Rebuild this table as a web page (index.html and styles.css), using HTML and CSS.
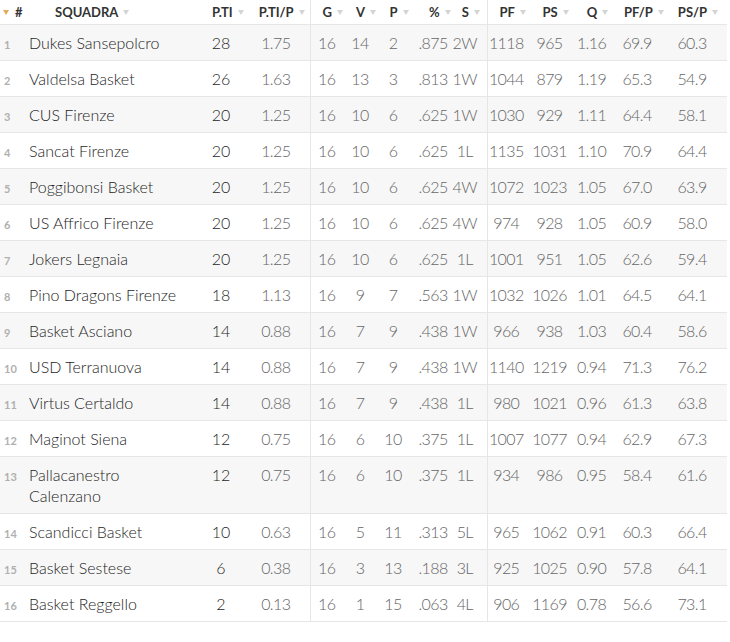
FILE: index.html
```html
<!DOCTYPE html>
<html lang="it">
<head>
<meta charset="utf-8">
<title>Classifica</title>
<link rel="stylesheet" href="styles.css">
</head>
<body>
<table class="standings">
  <colgroup>
    <col class="c-rank"><col class="c-team"><col class="c-pti"><col class="c-ptip"><col class="c-g"><col class="c-v"><col class="c-p"><col class="c-pct"><col class="c-s"><col class="c-pf"><col class="c-ps"><col class="c-q"><col class="c-pfp"><col class="c-psp">
  </colgroup>
  <thead>
    <tr>
      <th class="rank"><span class="arrow active"></span><span class="hash">#</span></th>
      <th class="team">SQUADRA<span class="arrow"></span></th>
      <th class="num">P.TI<span class="arrow"></span></th>
      <th class="num">P.TI/P<span class="arrow"></span></th>
      <th class="num sep">G<span class="arrow"></span></th>
      <th class="num">V<span class="arrow"></span></th>
      <th class="num">P<span class="arrow"></span></th>
      <th class="num pct">%<span class="arrow"></span></th>
      <th class="num s">S<span class="arrow"></span></th>
      <th class="num sep pf">PF<span class="arrow"></span></th>
      <th class="num">PS<span class="arrow"></span></th>
      <th class="num">Q<span class="arrow"></span></th>
      <th class="num">PF/P<span class="arrow"></span></th>
      <th class="num psp">PS/P<span class="arrow"></span></th>
    </tr>
  </thead>
  <tbody>
    <tr><td class="rank">1</td><td class="team">Dukes Sansepolcro</td><td class="pts">28</td><td class="num">1.75</td><td class="num sep">16</td><td class="num">14</td><td class="num">2</td><td class="num pct">.875</td><td class="num s">2W</td><td class="num sep pf">1118</td><td class="num">965</td><td class="num">1.16</td><td class="num">69.9</td><td class="num psp">60.3</td></tr>
    <tr><td class="rank">2</td><td class="team">Valdelsa Basket</td><td class="pts">26</td><td class="num">1.63</td><td class="num sep">16</td><td class="num">13</td><td class="num">3</td><td class="num pct">.813</td><td class="num s">1W</td><td class="num sep pf">1044</td><td class="num">879</td><td class="num">1.19</td><td class="num">65.3</td><td class="num psp">54.9</td></tr>
    <tr><td class="rank">3</td><td class="team">CUS Firenze</td><td class="pts">20</td><td class="num">1.25</td><td class="num sep">16</td><td class="num">10</td><td class="num">6</td><td class="num pct">.625</td><td class="num s">1W</td><td class="num sep pf">1030</td><td class="num">929</td><td class="num">1.11</td><td class="num">64.4</td><td class="num psp">58.1</td></tr>
    <tr><td class="rank">4</td><td class="team">Sancat Firenze</td><td class="pts">20</td><td class="num">1.25</td><td class="num sep">16</td><td class="num">10</td><td class="num">6</td><td class="num pct">.625</td><td class="num s">1L</td><td class="num sep pf">1135</td><td class="num">1031</td><td class="num">1.10</td><td class="num">70.9</td><td class="num psp">64.4</td></tr>
    <tr><td class="rank">5</td><td class="team">Poggibonsi Basket</td><td class="pts">20</td><td class="num">1.25</td><td class="num sep">16</td><td class="num">10</td><td class="num">6</td><td class="num pct">.625</td><td class="num s">4W</td><td class="num sep pf">1072</td><td class="num">1023</td><td class="num">1.05</td><td class="num">67.0</td><td class="num psp">63.9</td></tr>
    <tr><td class="rank">6</td><td class="team">US Affrico Firenze</td><td class="pts">20</td><td class="num">1.25</td><td class="num sep">16</td><td class="num">10</td><td class="num">6</td><td class="num pct">.625</td><td class="num s">4W</td><td class="num sep pf">974</td><td class="num">928</td><td class="num">1.05</td><td class="num">60.9</td><td class="num psp">58.0</td></tr>
    <tr><td class="rank">7</td><td class="team">Jokers Legnaia</td><td class="pts">20</td><td class="num">1.25</td><td class="num sep">16</td><td class="num">10</td><td class="num">6</td><td class="num pct">.625</td><td class="num s">1L</td><td class="num sep pf">1001</td><td class="num">951</td><td class="num">1.05</td><td class="num">62.6</td><td class="num psp">59.4</td></tr>
    <tr><td class="rank">8</td><td class="team">Pino Dragons Firenze</td><td class="pts">18</td><td class="num">1.13</td><td class="num sep">16</td><td class="num">9</td><td class="num">7</td><td class="num pct">.563</td><td class="num s">1W</td><td class="num sep pf">1032</td><td class="num">1026</td><td class="num">1.01</td><td class="num">64.5</td><td class="num psp">64.1</td></tr>
    <tr><td class="rank">9</td><td class="team">Basket Asciano</td><td class="pts">14</td><td class="num">0.88</td><td class="num sep">16</td><td class="num">7</td><td class="num">9</td><td class="num pct">.438</td><td class="num s">1W</td><td class="num sep pf">966</td><td class="num">938</td><td class="num">1.03</td><td class="num">60.4</td><td class="num psp">58.6</td></tr>
    <tr><td class="rank">10</td><td class="team">USD Terranuova</td><td class="pts">14</td><td class="num">0.88</td><td class="num sep">16</td><td class="num">7</td><td class="num">9</td><td class="num pct">.438</td><td class="num s">1W</td><td class="num sep pf">1140</td><td class="num">1219</td><td class="num">0.94</td><td class="num">71.3</td><td class="num psp">76.2</td></tr>
    <tr><td class="rank">11</td><td class="team">Virtus Certaldo</td><td class="pts">14</td><td class="num">0.88</td><td class="num sep">16</td><td class="num">7</td><td class="num">9</td><td class="num pct">.438</td><td class="num s">1L</td><td class="num sep pf">980</td><td class="num">1021</td><td class="num">0.96</td><td class="num">61.3</td><td class="num psp">63.8</td></tr>
    <tr><td class="rank">12</td><td class="team">Maginot Siena</td><td class="pts">12</td><td class="num">0.75</td><td class="num sep">16</td><td class="num">6</td><td class="num">10</td><td class="num pct">.375</td><td class="num s">1L</td><td class="num sep pf">1007</td><td class="num">1077</td><td class="num">0.94</td><td class="num">62.9</td><td class="num psp">67.3</td></tr>
    <tr><td class="rank">13</td><td class="team">Pallacanestro Calenzano</td><td class="pts">12</td><td class="num">0.75</td><td class="num sep">16</td><td class="num">6</td><td class="num">10</td><td class="num pct">.375</td><td class="num s">1L</td><td class="num sep pf">934</td><td class="num">986</td><td class="num">0.95</td><td class="num">58.4</td><td class="num psp">61.6</td></tr>
    <tr><td class="rank">14</td><td class="team">Scandicci Basket</td><td class="pts">10</td><td class="num">0.63</td><td class="num sep">16</td><td class="num">5</td><td class="num">11</td><td class="num pct">.313</td><td class="num s">5L</td><td class="num sep pf">965</td><td class="num">1062</td><td class="num">0.91</td><td class="num">60.3</td><td class="num psp">66.4</td></tr>
    <tr><td class="rank">15</td><td class="team">Basket Sestese</td><td class="pts">6</td><td class="num">0.38</td><td class="num sep">16</td><td class="num">3</td><td class="num">13</td><td class="num pct">.188</td><td class="num s">3L</td><td class="num sep pf">925</td><td class="num">1025</td><td class="num">0.90</td><td class="num">57.8</td><td class="num psp">64.1</td></tr>
    <tr><td class="rank">16</td><td class="team">Basket Reggello</td><td class="pts">2</td><td class="num">0.13</td><td class="num sep">16</td><td class="num">1</td><td class="num">15</td><td class="num pct">.063</td><td class="num s">4L</td><td class="num sep pf">906</td><td class="num">1169</td><td class="num">0.78</td><td class="num">56.6</td><td class="num psp">73.1</td></tr>
  </tbody>
</table>
</body>
</html>
```

FILE: styles.css
```css
html, body {
  margin: 0;
  padding: 0;
  background: #fff;
}

body {
  font-family: Lato, "Liberation Sans", sans-serif;
  color: #333;
}

.standings {
  border-collapse: collapse;
  table-layout: fixed;
  width: 727px;
}

.c-rank { width: 26px; }
.c-team { width: 174px; }
.c-pti { width: 42px; }
.c-ptip { width: 68px; }
.c-g { width: 33px; }
.c-v { width: 34px; }
.c-p { width: 32px; }
.c-pct { width: 40px; }
.c-s { width: 38px; }
.c-pf { width: 41px; }
.c-ps { width: 43px; }
.c-q { width: 41px; }
.c-pfp { width: 50px; }
.c-psp { width: 65px; }

.standings th {
  font-size: 13px;
  font-weight: 700;
  line-height: 16px;
  padding: 4px 0 4px 12px;
  text-align: center;
  white-space: nowrap;
  color: #333;
  border-bottom: 1px solid #e6e6e6;
}

.standings th.rank {
  padding-left: 3px;
  text-align: left;
}

.standings th.team {
  padding-left: 29px;
  text-align: left;
}

.hash {
  margin-left: 6px;
}

.arrow {
  display: inline-block;
  width: 0;
  height: 0;
  margin-left: 5px;
  border-left: 3.5px solid transparent;
  border-right: 3.5px solid transparent;
  border-top: 5px solid #d4d4d4;
  vertical-align: 2px;
}

.arrow.active {
  margin-left: 0;
  border-top-color: #e4aa5c;
}

.standings td {
  padding: 7px 0;
  line-height: 21px;
  vertical-align: top;
  border-bottom: 1px solid #e6e6e6;
  text-align: center;
}

.standings tbody tr:nth-child(odd) td {
  background: #f7f7f7;
}

.standings td.rank {
  font-size: 11px;
  font-weight: 700;
  color: #b0b0b0;
  text-align: left;
  padding: 9px 0 5px 4px;
}

.standings td.team {
  font-size: 16px;
  font-weight: 300;
  color: #1e1e1e;
  text-align: left;
  padding-left: 3px;
  padding-right: 14px;
}

.standings td.pts {
  font-size: 16px;
  font-weight: 300;
  color: #1e1e1e;
}

.standings td.num {
  font-size: 16px;
  font-weight: 300;
  color: #666;
  letter-spacing: -0.6px;
}

.standings .sep {
  border-left: 1px solid #e6e6e6;
}

.standings td.pct { padding-left: 8px; }
.standings th.pct { padding-left: 20px; }
.standings td.s { padding-right: 6px; }
.standings th.s { padding-right: 6px; }
.standings td.pf { padding-right: 3px; }
.standings th.pf { padding-right: 3px; }
.standings td.psp { padding-right: 5px; }
.standings th.psp { padding-right: 5px; }
```
